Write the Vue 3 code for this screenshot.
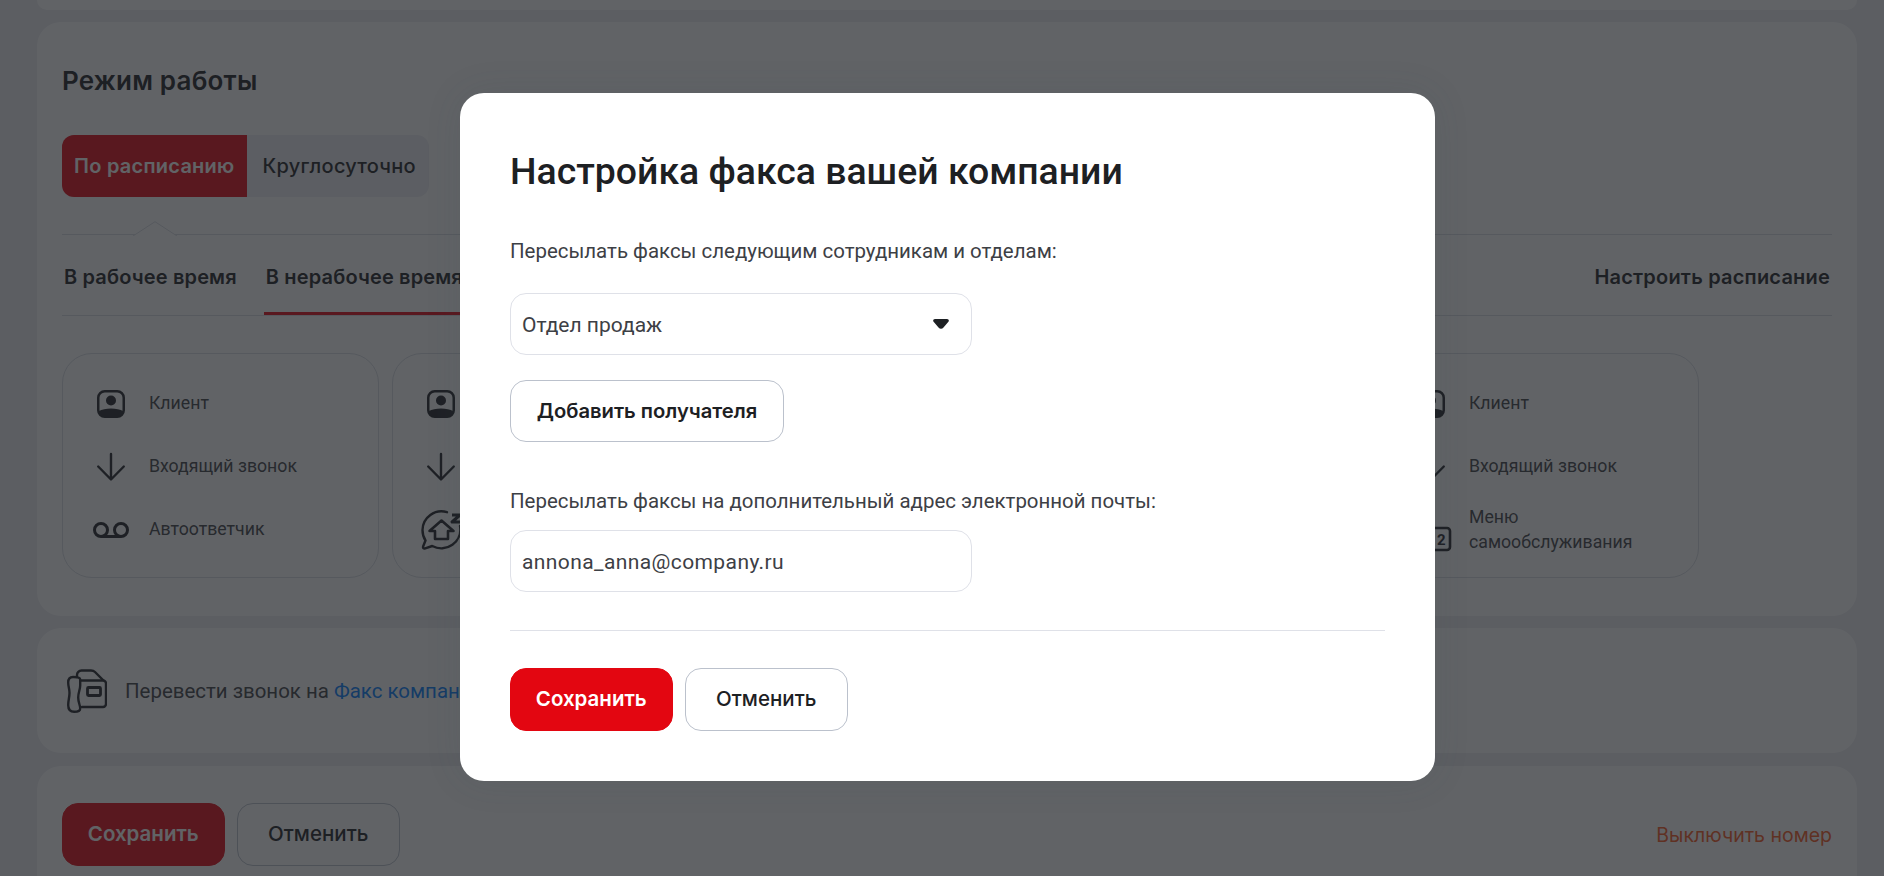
<template>
  <div class="page">
    <div class="card card-top"></div>

    <section class="card card-mode">
      <h2 class="mode-title">Режим работы</h2>
      <div class="segment">
        <span class="segment-item active">По расписанию</span>
        <span class="segment-item">Круглосуточно</span>
      </div>
      <div class="notch-line">
        <svg class="notch" width="44" height="15" viewBox="0 0 44 15">
          <path d="M0 15L22 .7 44 15" fill="#fff" stroke="#d9dce3" />
        </svg>
      </div>
      <div class="tabs">
        <span class="tab">В рабочее время</span>
        <span class="tab tab-active">В нерабочее время</span>
        <span class="tab tab-right">Настроить расписание</span>
      </div>
      <div class="flows">
        <div v-for="(flow, i) in flows" :key="i" class="flow">
          <div v-for="step in flow" :key="step.text" class="flow-row">
            <span class="flow-icon">
              <svg v-if="step.icon === 'client'" width="28" height="28" viewBox="0 0 28 28">
                <rect x="1.250" y="1.250" width="25.500" height="25.500" rx="6.500" fill="none" stroke="#1e2125" stroke-width="2.500" />
                <path d="M2 21C7 17.500 21 17.500 26 21v1a5 5 0 0 1-5 5H7a5 5 0 0 1-5-5z" fill="#1e2125" />
                <circle cx="14" cy="10.500" r="5" fill="#1e2125" />
              </svg>
              <svg v-else-if="step.icon === 'down'" width="30" height="30" viewBox="0 0 30 30" fill="none" stroke="#1e2125" stroke-width="2.400" stroke-linecap="round" stroke-linejoin="round">
                <path d="M15 2v25M2.200 14.500L15 27.500l12.800-13" />
              </svg>
              <svg v-else-if="step.icon === 'voicemail'" width="36" height="16" viewBox="0 0 36 16" fill="none" stroke="#1e2125" stroke-width="3">
                <circle cx="8" cy="8" r="6.500" />
                <circle cx="28" cy="8" r="6.500" />
                <path d="M8 14.500h20" />
              </svg>
              <svg v-else-if="step.icon === 'sleep'" width="42" height="42" viewBox="0 0 42 42" fill="none" stroke="#1e2125" stroke-width="2.400" stroke-linecap="round" stroke-linejoin="round">
                <path d="M27 3.200A19 19 0 0 0 2.500 21c0 4 1 7.500 3 10.500l-2.300 5.800c-.6 1.500.5 2.500 2 2l7-2.300A19 19 0 0 0 40 17" />
                <path d="M21.500 11.500L9.500 22H15v8h13v-8h5.500z" stroke-width="2.600" />
                <path d="M32 6h8l-8 7h8" stroke-width="3" stroke-linecap="butt" />
              </svg>
              <svg v-else class="menu-icon" width="42" height="26" viewBox="0 0 42 26" fill="none" stroke="#1e2125" stroke-width="2.600" stroke-linejoin="round">
                <rect x="2" y="2" width="38" height="22" rx="3" />
                <text x="27" y="19" font-size="15" font-weight="700" font-family="Roboto, sans-serif" fill="#1e2125" stroke="none">2</text>
              </svg>
            </span>
            <span class="flow-text">{{ step.text }}</span>
          </div>
        </div>
      </div>
    </section>

    <section class="card card-transfer">
      <svg class="fax-icon" width="40" height="44" viewBox="0 0 40 44" fill="none" stroke="#1e2125" stroke-width="2.400" stroke-linejoin="round" stroke-linecap="round">
        <path d="M10 8V6a4.500 4.500 0 0 1 4.500-4.500H24c1.500 0 3 .5 4 1.500l8 8" />
        <path d="M14 11.500h22a3 3 0 0 1 3 3V35a3 3 0 0 1-3 3H15" />
        <path d="M6 8C3 8 1.200 10 1.200 13.500c0 4 1.300 6 1.300 10.500S1.200 31 1.200 36c0 4 2 6.800 6 6.800 3.500 0 6-1 6-3.300 0-3.500-2-6-2-11 0-5 2-8 2-12v-6c0-2-2-2.500-7.200-2.500z" />
        <rect x="20.500" y="18.500" width="13" height="8" rx="1" stroke-width="2.800" />
      </svg>
      <span class="transfer-text">Перевести звонок на <a class="transfer-link">Факс компании</a></span>
    </section>

    <section class="card card-actions">
      <div class="actions">
        <button class="btn btn-red" type="button">Сохранить</button>
        <button class="btn btn-line" type="button">Отменить</button>
      </div>
      <span class="turn-off">Выключить номер</span>
    </section>

    <div class="overlay"></div>

    <div class="modal-wrap">
      <div class="modal">
        <h1 class="modal-title">Настройка факса вашей компании</h1>
        <p class="label">Пересылать факсы следующим сотрудникам и отделам:</p>
        <div class="field select">
          <span>Отдел продаж</span>
          <svg width="16" height="10" viewBox="0 0 16 10">
            <path d="M2 0h12c1.600 0 2.400 1.600 1.400 2.800L10.500 8.600c-1.300 1.600-3.700 1.600-5 0L.6 2.800C-.4 1.600.4 0 2 0z" fill="#1d2023" />
          </svg>
        </div>
        <button class="btn btn-add" type="button">Добавить получателя</button>
        <p class="label label-mail">Пересылать факсы на дополнительный адрес электронной почты:</p>
        <div class="field field-mail">annona_anna@company.ru</div>
        <div class="modal-line"></div>
        <div class="actions">
          <button class="btn btn-red" type="button">Сохранить</button>
          <button class="btn" type="button">Отменить</button>
        </div>
      </div>
    </div>
  </div>
</template>

<script setup>
const client = { icon: 'client', text: 'Клиент' }
const incoming = { icon: 'down', text: 'Входящий звонок' }

const flows = [
  [client, incoming, { icon: 'voicemail', text: 'Автоответчик' }],
  [client, incoming, { icon: 'sleep', text: 'Нерабочее время' }],
  [client, incoming, { icon: 'voicemail', text: 'Автоответчик' }],
  [client, incoming, { icon: 'voicemail', text: 'Автоответчик' }],
  [client, incoming, { icon: 'menu', text: 'Меню самообслуживания' }],
]
</script>

<style scoped>
.page {
  position: relative;
  height: 876px;
  overflow: hidden;
  box-sizing: border-box;
  padding: 0 27px 0 37px;
  background: #ededf1;
  color: #1d2023;
  font-family: Roboto, "Liberation Sans", sans-serif;
}
.card {
  background: #fff;
  border-radius: 24px;
  margin-bottom: 13px;
}
.card-top {
  height: 10px;
  margin-bottom: 12px;
  border-radius: 0 0 24px 24px;
}
.card-mode {
  box-sizing: border-box;
  height: 594px;
  padding: 0 25px;
  margin-bottom: 12px;
}
.mode-title {
  margin: 0;
  padding-top: 43px;
  font: 600 26px/32px Inter, sans-serif;
  letter-spacing: 0.2px;
}
.segment {
  display: inline-flex;
  margin-top: 38px;
  height: 62px;
  border-radius: 12px;
  background: #eeeff3;
  font: 500 20px/62px Inter, sans-serif;
  letter-spacing: 0.25px;
}
.segment-item {
  padding: 0 13px 0 16px;
}
.segment-item.active {
  padding: 0 12px;
  background: #e30611;
  color: #fff;
  border-radius: 12px 0 0 12px;
  font-weight: 600;
  letter-spacing: 0.25px;
}
.notch-line {
  position: relative;
  margin-top: 37px;
  border-top: 1px solid #d9dce3;
}
.notch {
  position: absolute;
  left: 71px;
  top: -14px;
}
.tabs {
  display: flex;
  gap: 25px;
  height: 80px;
  border-bottom: 1px solid #d9dce3;
  font: 600 20px/84px Inter, sans-serif;
  letter-spacing: 0.15px;
}
.tab {
  padding: 0 2px;
}
.tab-active {
  width: 420px;
  box-sizing: border-box;
  border-bottom: 3px solid #e30611;
  height: 80px;
}
.tab-right {
  margin-left: auto;
  letter-spacing: 0.2px;
}
.flows {
  display: flex;
  gap: 13px;
  margin-top: 37px;
}
.flow {
  box-sizing: border-box;
  flex: 0 0 317px;
  height: 225px;
  padding: 18px 0 0;
  border: 1px solid #d9dce3;
  border-radius: 30px;
}
.flow-row {
  display: flex;
  align-items: center;
  height: 63px;
  font-size: 17.700px;
  line-height: 25px;
  color: #3d4045;
}
.flow-icon {
  flex: 0 0 86px;
  box-sizing: border-box;
  display: flex;
  justify-content: center;
  padding-left: 10px;
}
.menu-icon {
  margin-top: 18px;
}
.flow-text {
  display: block;
  max-width: 170px;
}
.card-transfer {
  display: flex;
  align-items: center;
  height: 125px;
  padding-left: 30px;
}
.fax-icon {
  margin-right: 18px;
  flex: none;
}
.transfer-text {
  font-size: 20.450px;
  color: #3d4045;
}
.transfer-link {
  color: #007cff;
}
.card-actions {
  display: flex;
  align-items: flex-start;
  justify-content: space-between;
  height: 140px;
  padding: 37px 25px 0;
}
.turn-off {
  margin-top: 20px;
  font: 400 19.500px/24px Inter, sans-serif;
  color: #f95721;
}
.actions {
  display: flex;
  gap: 12.500px;
}
.btn {
  box-sizing: border-box;
  display: block;
  height: 63px;
  width: 162.500px;
  border-radius: 16px;
  border: 1px solid #bbc1cc;
  background: transparent;
  color: #1d2023;
  font: 500 20.500px/1 Inter, sans-serif;
  padding: 0;
}
.btn-red {
  border-color: #e30611;
  background: #e30611;
  color: #fff;
  font-weight: 600;
}
.overlay {
  position: absolute;
  inset: 0;
  background: rgba(30, 33, 37, 0.7);
}
.modal-wrap {
  position: absolute;
  inset: 0;
  display: grid;
  place-items: center;
  padding: 0 0 2px 11px;
}
.modal {
  box-sizing: border-box;
  width: 975px;
  height: 688px;
  padding: 51px 50px 0;
  background: #fff;
  border-radius: 24px;
  box-shadow: 0 0 36px rgba(60, 75, 85, 0.12);
}
.modal-title {
  margin: 0;
  font: 500 37.400px/54px Roboto, sans-serif;
}
.label {
  margin: 0;
  padding-top: 39px;
  font-size: 20.450px;
  line-height: 28px;
  color: #3d4045;
}
.label-mail {
  padding-top: 45px;
}
.field {
  box-sizing: border-box;
  width: 462px;
  height: 62px;
  margin-top: 28px;
  padding: 2px 11px 0;
  border: 1px solid #dfe1e8;
  border-radius: 16px;
  font-size: 21px;
  line-height: 58px;
  color: #3d4045;
}
.field-mail {
  margin-top: 15px;
  letter-spacing: 0.4px;
}
.select {
  display: flex;
  align-items: center;
  justify-content: space-between;
  padding-right: 22px;
}
.select svg {
  margin-top: -3px;
}
.btn-add {
  width: 274px;
  height: 62px;
  margin-top: 25px;
  font-weight: 600;
  font-size: 20.200px;
}
.modal-line {
  margin-top: 38px;
  margin-bottom: 37px;
  border-top: 1px solid #dfe1e8;
}
</style>

<style>
body {
  overflow: hidden;
}
</style>
